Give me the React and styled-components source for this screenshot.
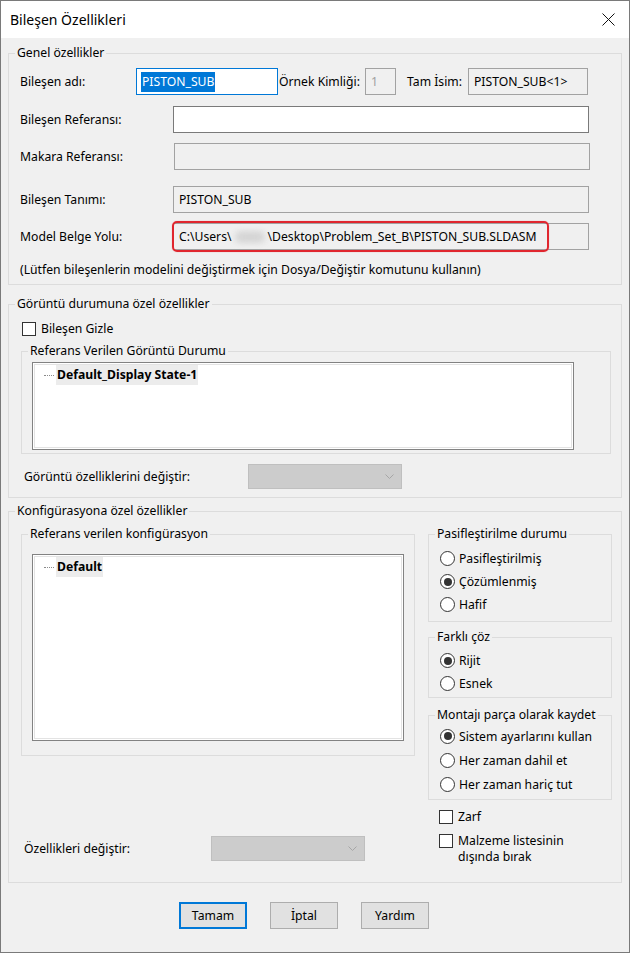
import React from 'react';
import styled, { createGlobalStyle } from 'styled-components';

const Global = createGlobalStyle`
  html, body { margin: 0; padding: 0; background: #f0f0f0; }
  body { font-family: "Noto Sans", "Segoe UI", sans-serif; font-size: 12.2px; color: #000; }
  * { box-sizing: border-box; }
`;

const Window = styled.div`
  width: 630px;
  height: 953px;
  border: 1px solid #7a7a7a;
  background: #f0f0f0;
  display: flex;
  flex-direction: column;
`;

const TitleBar = styled.div`
  height: 37px;
  flex: 0 0 37px;
  background: #fff;
  display: flex;
  align-items: center;
  justify-content: space-between;
  padding: 0 14px 0 9px;
  font-size: 14px;
`;

const CloseIcon = () => (
  <svg width="13" height="13" viewBox="0 0 13 13">
    <path d="M0.5 0.5 L12.5 12.5 M12.5 0.5 L0.5 12.5" stroke="#111" strokeWidth="1" fill="none" />
  </svg>
);

const Body = styled.div`
  display: flex;
  flex-direction: column;
  padding: 0 7px;
`;

const Group = styled.fieldset`
  margin: ${(p) => p.$mt || 0}px 0 0 0;
  padding: ${(p) => p.$pt || 0}px ${(p) => p.$pr || 0}px ${(p) => p.$pb || 0}px ${(p) => p.$pl || 0}px;
  border: 1px solid #dcdcdc;
  min-width: 0;
  & > legend {
    margin-left: ${(p) => 6 - (p.$pl || 0)}px;
  }
`;

const Legend = styled.legend`
  padding: 0 2px;
  height: 16px;
  line-height: 16px;
  white-space: nowrap;
`;

const Row = styled.div`
  display: flex;
  align-items: center;
  height: ${(p) => p.$h || 27}px;
  margin-top: ${(p) => p.$mt || 0}px;
`;

const Label = styled.span`
  flex: 0 0 ${(p) => p.$w}px;
  margin-left: ${(p) => p.$ml || 0}px;
  white-space: nowrap;
`;

const borderFor = (v) => (v === 'focus' ? '#0078d7' : v === 'disabled' ? '#a2a2a2' : '#7a7a7a');

const TextBox = styled.div`
  position: relative;
  flex: 0 0 ${(p) => p.$w}px;
  height: 27px;
  border: 1px solid ${(p) => borderFor(p.$variant)};
  background: ${(p) => (p.$variant === 'disabled' ? '#f0f0f0' : '#fff')};
  display: flex;
  align-items: center;
  padding-left: ${(p) => p.$pl ?? 5}px;
  white-space: nowrap;
`;

const Selected = styled.span`
  background: #0078d7;
  color: #fff;
  line-height: 20px;
  padding: 0 1px;
`;

const Blur = styled.span`
  display: inline-block;
  width: 30px;
  height: 12px;
  margin: 0 3px;
  background: #c9c9c9;
  border-radius: 6px;
  filter: blur(3px);
  opacity: 0.7;
`;

const Highlight = styled.span`
  position: absolute;
  left: -2px;
  top: -3px;
  width: 377px;
  height: 31px;
  border: 2px solid #e0262e;
  border-radius: 5px;
  pointer-events: none;
  box-shadow: 0 0 1px rgba(224, 38, 46, 0.5);
`;

const Note = styled.div`
  margin-top: 12px;
  height: 16px;
  line-height: 16px;
  white-space: nowrap;
`;

const CheckRow = styled.label`
  display: flex;
  align-items: ${(p) => (p.$top ? 'flex-start' : 'center')};
  gap: 5px;
  margin: ${(p) => p.$mt || 0}px 0 0 ${(p) => p.$ml || 0}px;
  line-height: 16px;
  min-height: 16px;
`;

const Box = styled.span`
  flex: 0 0 14px;
  width: 14px;
  height: 14px;
  margin-top: ${(p) => p.$mt || 0}px;
  border: 1px solid #333;
  background: #fff;
`;

const RadioRow = styled.label`
  display: flex;
  align-items: center;
  gap: 4px;
  height: ${(p) => p.$h || 23}px;
  white-space: nowrap;
`;

const Radio = styled.span`
  flex: 0 0 15px;
  width: 15px;
  height: 15px;
  border-radius: 50%;
  border: 1px solid #333;
  background: #fff;
  display: flex;
  align-items: center;
  justify-content: center;
  &::after {
    content: '';
    display: ${(p) => (p.$checked ? 'block' : 'none')};
    width: 8px;
    height: 8px;
    border-radius: 50%;
    background: #333;
  }
`;

const Tree = styled.div`
  width: ${(p) => p.$w}px;
  height: ${(p) => p.$h}px;
  background: #fff;
  border: 1px solid #828282;
  box-shadow: inset 0 0 0 1px #fff, inset 0 0 0 2px #e3e3e3;
  padding-top: 2px;
`;

const TreeItem = styled.div`
  display: flex;
  align-items: center;
  height: 20px;
`;

const Connector = styled.span`
  width: 10px;
  margin: 0 2px 0 11px;
  border-top: 1px dotted #8a8a8a;
`;

const ItemText = styled.span`
  background: #ececec;
  font-weight: 700;
  line-height: 20px;
  padding: 0 1px;
`;

const Combo = styled.div`
  flex: 0 0 ${(p) => p.$w}px;
  height: 25px;
  background: #cccccc;
  border: 1px solid #bfbfbf;
  display: flex;
  align-items: center;
  justify-content: flex-end;
  padding-right: 7px;
`;

const Chevron = () => (
  <svg width="9" height="6" viewBox="0 0 9 6">
    <path d="M0.5 0.5 L4.5 4.5 L8.5 0.5" stroke="#a6a6a6" strokeWidth="1" fill="none" />
  </svg>
);

const Columns = styled.div`
  display: flex;
  align-items: flex-start;
  gap: 13px;
`;

const Column = styled.div`
  flex: 0 0 ${(p) => p.$w}px;
  display: flex;
  flex-direction: column;
`;

const ButtonBar = styled.div`
  display: flex;
  gap: 23px;
  margin: 19px 0 0 171px;
`;

const Button = styled.button`
  width: 68px;
  height: 27px;
  font-family: inherit;
  font-size: 12.2px;
  color: #000;
  background: #e1e1e1;
  border: ${(p) => (p.$default ? '2px solid #0078d7' : '1px solid #adadad')};
  padding: 0;
`;

const Dim = styled.span`
  color: #a0a0a0;
`;

export default function App() {
  return (
    <>
      <Global />
      <Window>
        <TitleBar>
          <span>Bileşen Özellikleri</span>
          <CloseIcon />
        </TitleBar>
        <Body>
          <Group $mt={7} $pt={7} $pl={11} $pb={6}>
            <Legend>Genel özellikler</Legend>
            <Row>
              <Label $w={116}>Bileşen adı:</Label>
              <TextBox $w={142} $variant="focus" $pl={4}>
                <Selected>PISTON_SUB</Selected>
              </TextBox>
              <Label $w={86} $ml={1}>Örnek Kimliği:</Label>
              <TextBox $w={31} $variant="disabled" $pl={5}>
                <Dim>1</Dim>
              </TextBox>
              <Label $w={61} $ml={11}>Tam İsim:</Label>
              <TextBox $w={120} $variant="disabled">PISTON_SUB&lt;1&gt;</TextBox>
            </Row>
            <Row $mt={11}>
              <Label $w={153}>Bileşen Referansı:</Label>
              <TextBox $w={416} $variant="enabled" />
            </Row>
            <Row $mt={10}>
              <Label $w={154}>Makara Referansı:</Label>
              <TextBox $w={416} $variant="disabled" />
            </Row>
            <Row $mt={16}>
              <Label $w={153}>Bileşen Tanımı:</Label>
              <TextBox $w={416} $variant="disabled">PISTON_SUB</TextBox>
            </Row>
            <Row $mt={10}>
              <Label $w={153}>Model Belge Yolu:</Label>
              <TextBox $w={416} $variant="disabled">
                {'C:\\Users\\'}
                <Blur />
                {'\\Desktop\\Problem_Set_B\\PISTON_SUB.SLDASM'}
                <Highlight />
              </TextBox>
            </Row>
            <Note>(Lütfen bileşenlerin modelini değiştirmek için Dosya/Değiştir komutunu kullanın)</Note>
          </Group>

          <Group $mt={11} $pt={9} $pl={12} $pr={10} $pb={8}>
            <Legend>Görüntü durumuna özel özellikler</Legend>
            <CheckRow $ml={1}>
              <Box />
              Bileşen Gizle
            </CheckRow>
            <Group $mt={6} $pt={3} $pl={10} $pb={3}>
              <Legend>Referans Verilen Görüntü Durumu</Legend>
              <Tree $w={542} $h={88}>
                <TreeItem>
                  <Connector />
                  <ItemText>Default_Display State-1</ItemText>
                </TreeItem>
              </Tree>
            </Group>
            <Row $mt={10} $h={25}>
              <Label $w={224} $ml={3}>Görüntü özelliklerini değiştir:</Label>
              <Combo $w={154}>
                <Chevron />
              </Combo>
            </Row>
          </Group>

          <Group $mt={5} $pl={12} $pr={9} $pb={17}>
            <Legend>Konfigürasyona özel özellikler</Legend>
            <Columns>
              <Column $w={394}>
                <Group $mt={7} $pt={12} $pl={10} $pr={10} $pb={14}>
                  <Legend>Referans verilen konfigürasyon</Legend>
                  <Tree $w={372} $h={187}>
                    <TreeItem>
                      <Connector />
                      <ItemText>Default</ItemText>
                    </TreeItem>
                  </Tree>
                </Group>
                <Row $mt={80} $h={25}>
                  <Label $w={187} $ml={3}>Özellikleri değiştir:</Label>
                  <Combo $w={154}>
                    <Chevron />
                  </Combo>
                </Row>
              </Column>
              <Column $w={184}>
                <Group $mt={7} $pt={5} $pl={11} $pb={5}>
                  <Legend>Pasifleştirilme durumu</Legend>
                  <RadioRow><Radio />Pasifleştirilmiş</RadioRow>
                  <RadioRow><Radio $checked />Çözümlenmiş</RadioRow>
                  <RadioRow><Radio />Hafif</RadioRow>
                </Group>
                <Group $mt={7} $pt={4} $pl={11} $pb={2}>
                  <Legend>Farklı çöz</Legend>
                  <RadioRow><Radio $checked />Rijit</RadioRow>
                  <RadioRow><Radio />Esnek</RadioRow>
                </Group>
                <Group $mt={9} $pt={1} $pl={11} $pb={3}>
                  <Legend>Montajı parça olarak kaydet</Legend>
                  <RadioRow $h={24}><Radio $checked />Sistem ayarlarını kullan</RadioRow>
                  <RadioRow $h={24}><Radio />Her zaman dahil et</RadioRow>
                  <RadioRow $h={24}><Radio />Her zaman hariç tut</RadioRow>
                </Group>
                <CheckRow $mt={9} $ml={11}>
                  <Box />
                  Zarf
                </CheckRow>
                <CheckRow $mt={8} $ml={11} $top>
                  <Box $mt={1} />
                  <span>Malzeme listesinin<br />dışında bırak</span>
                </CheckRow>
              </Column>
            </Columns>
          </Group>

          <ButtonBar>
            <Button $default>Tamam</Button>
            <Button>İptal</Button>
            <Button>Yardım</Button>
          </ButtonBar>
        </Body>
      </Window>
    </>
  );
}
